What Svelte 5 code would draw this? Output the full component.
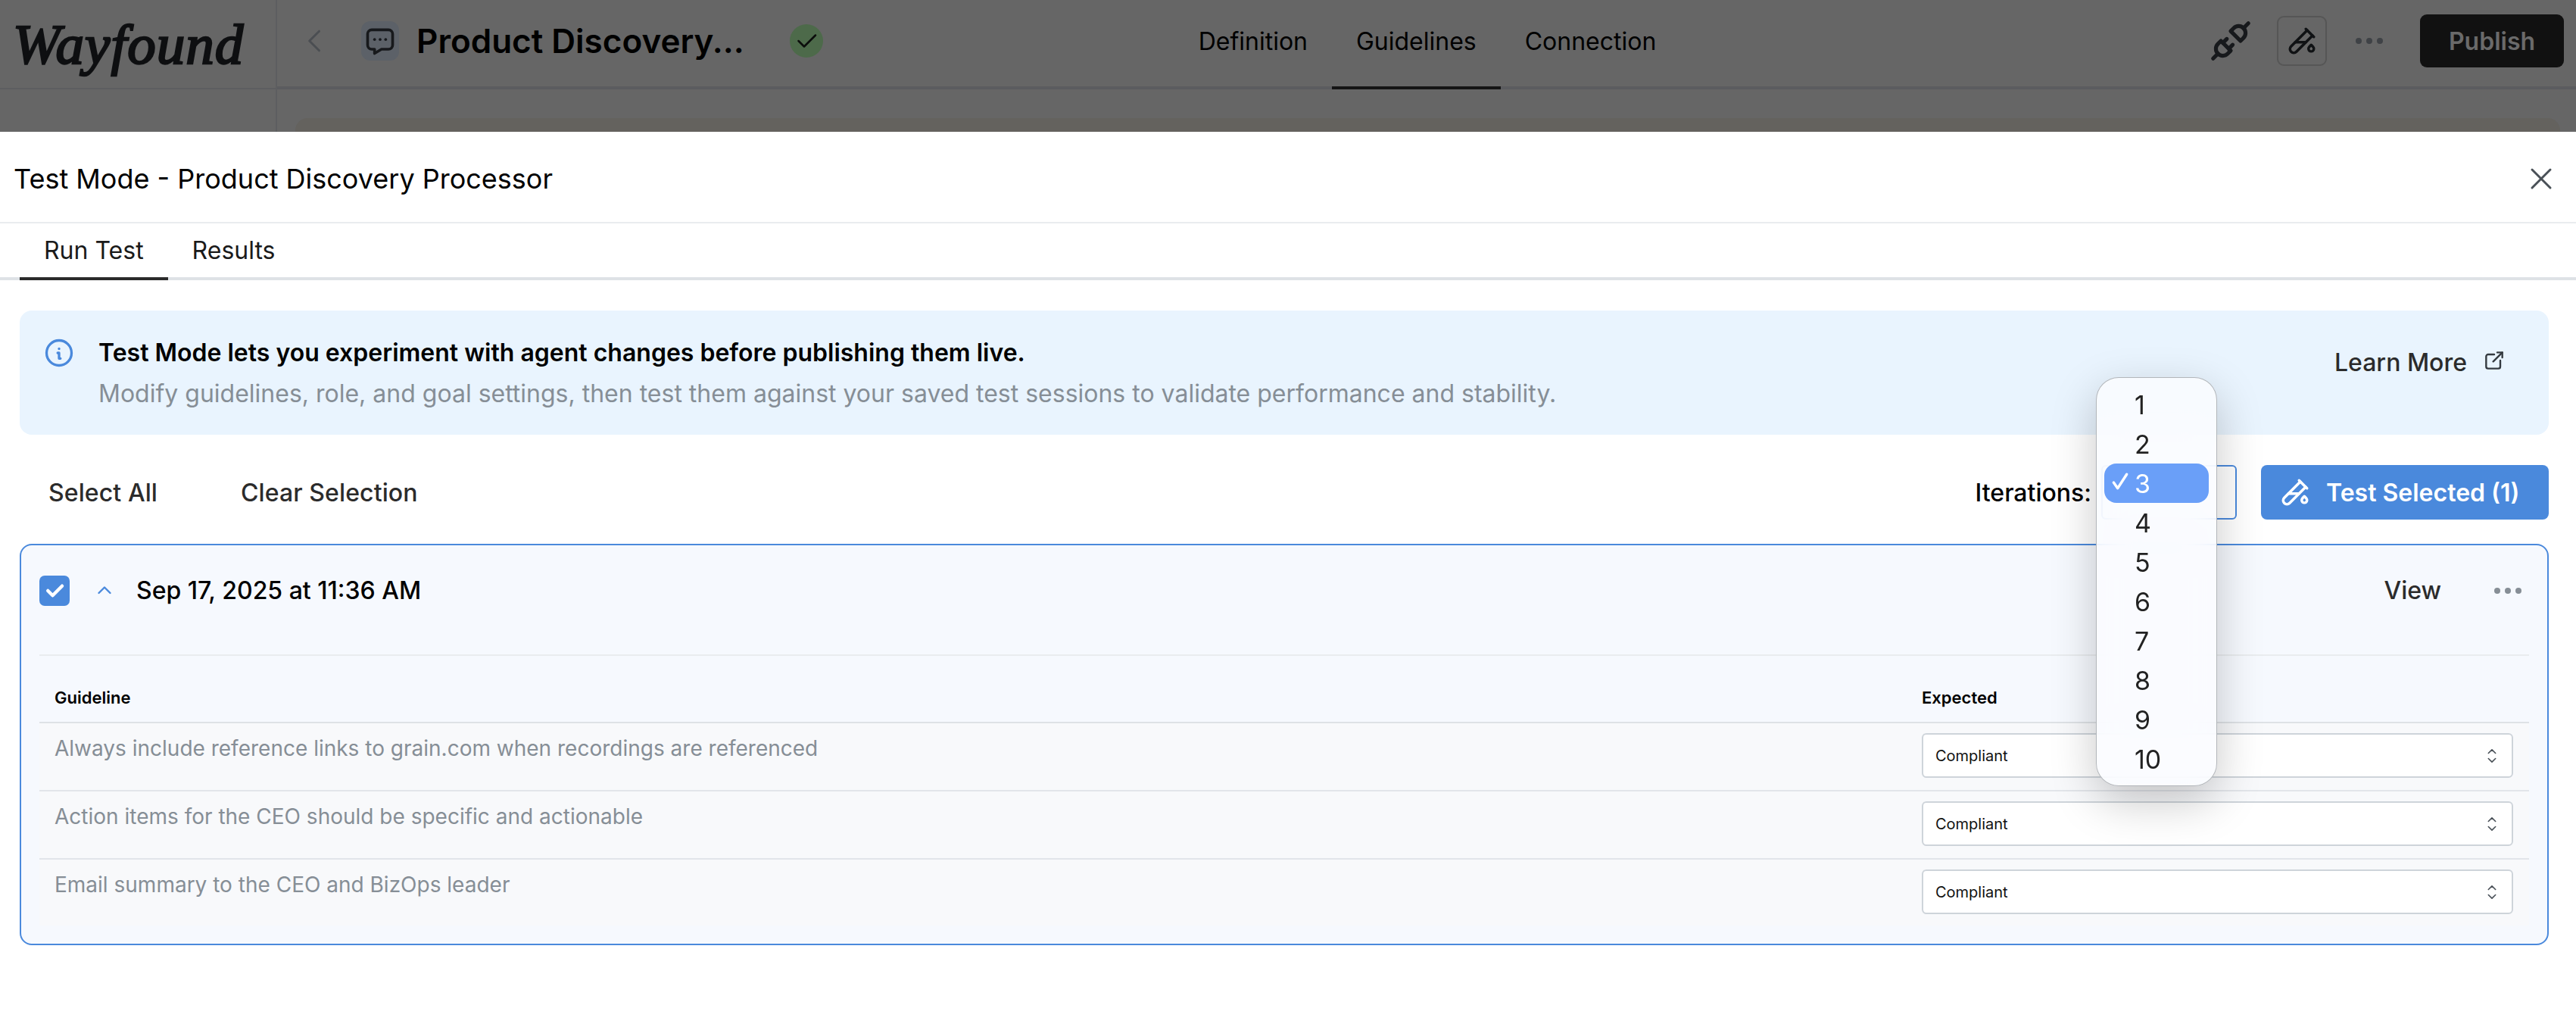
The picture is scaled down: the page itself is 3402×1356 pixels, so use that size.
<script lang="ts">
	const guidelines = [
		'Always include reference links to grain.com when recordings are referenced',
		'Action items for the CEO should be specific and actionable',
		'Email summary to the CEO and BizOps leader'
	];
	const options = [1, 2, 3, 4, 5, 6, 7, 8, 9, 10];
	let iterations = $state(3);
</script>

{#snippet pipe(size: number, width = 2)}
	<svg width={size} height={size} viewBox="0 0 24 24" fill="none" stroke="currentColor" stroke-width={width} stroke-linecap="round" stroke-linejoin="round">
		<path d="M20 8.04l-12.122 12.124a2.857 2.857 0 1 1 -4.041 -4.04l12.122 -12.124" />
		<path d="M7 13h8" />
		<path d="M19 15l1.5 1.6a2 2 0 1 1 -3 0l1.5 -1.602z" />
		<path d="M15 3l6 6" />
	</svg>
{/snippet}

{#snippet dots(cls: string)}
	<svg class={cls} width="36" height="10" viewBox="0 0 36 10" fill="currentColor">
		<circle cx="4" cy="5" r="4" /><circle cx="18" cy="5" r="4" /><circle cx="32" cy="5" r="4" />
	</svg>
{/snippet}

<div class="page">
	<!-- app behind the modal, dimmed -->
	<div class="behind">
		<aside class="side">
			<div class="logo-wrap"><span class="logo">Wayfound</span></div>
		</aside>
		<div class="main">
			<nav class="topnav">
				<div class="agent">
					<svg class="back" width="44" height="44" viewBox="0 0 24 24" fill="none" stroke="currentColor" stroke-width="1.6" stroke-linecap="round" stroke-linejoin="round"><path d="M15 5l-7 7l7 7" /></svg>
					<span class="chat">
						<svg width="44" height="44" viewBox="0 0 24 24" fill="none" stroke="currentColor" stroke-width="2" stroke-linecap="round" stroke-linejoin="round">
							<path d="M12 11v.01" /><path d="M8 11v.01" /><path d="M16 11v.01" />
							<path d="M18 4a3 3 0 0 1 3 3v8a3 3 0 0 1 -3 3h-5l-5 3v-3h-2a3 3 0 0 1 -3 -3v-8a3 3 0 0 1 3 -3z" />
						</svg>
					</span>
					<span class="agent-name">Product Discovery...</span>
					<span class="ok">
						<svg width="36" height="36" viewBox="0 0 24 24" fill="none" stroke="currentColor" stroke-width="1.7" stroke-linecap="round" stroke-linejoin="round"><path d="M5 12l5 5l10 -10" /></svg>
					</span>
				</div>
				<div class="navtabs">
					<span class="navtab">Definition</span>
					<span class="navtab active">Guidelines</span>
					<span class="navtab">Connection</span>
				</div>
				<div class="actions">
					<svg class="plug" width="62" height="62" viewBox="0 0 24 24" fill="none" stroke="currentColor" stroke-width="2" stroke-linecap="round" stroke-linejoin="round">
						<path d="M7 12l5 5l-1.5 1.5a3.536 3.536 0 1 1 -5 -5l1.5 -1.5z" />
						<path d="M17 12l-5 -5l1.5 -1.5a3.536 3.536 0 1 1 5 5l-1.5 1.5z" />
						<path d="M3 21l2.5 -2.5" /><path d="M18.5 5.5l2.5 -2.5" /><path d="M10 11l-2 2" /><path d="M13 14l-2 2" />
					</svg>
					<span class="testbtn">{@render pipe(42)}</span>
					{@render dots('navdots')}
					<span class="publish">Publish</span>
				</div>
			</nav>
			<div class="under"><div class="panel"></div></div>
		</div>
	</div>

	<section class="modal">
		<header class="modal-head">
			<h2>Test Mode - Product Discovery Processor</h2>
			<svg class="close" width="48" height="48" viewBox="0 0 24 24" fill="none" stroke="currentColor" stroke-width="1.5" stroke-linecap="round" stroke-linejoin="round"><path d="M18 6l-12 12" /><path d="M6 6l12 12" /></svg>
		</header>

		<div class="tabs">
			<span class="tab active">Run Test</span>
			<span class="tab">Results</span>
		</div>

		<div class="content">
			<div class="banner">
				<svg class="info" width="44" height="44" viewBox="0 0 24 24" fill="none" stroke="currentColor" stroke-width="1.8" stroke-linecap="round" stroke-linejoin="round">
					<path d="M3 12a9 9 0 1 0 18 0a9 9 0 0 0 -18 0" /><path d="M12 9h.01" /><path d="M11 12h1v4h1" />
				</svg>
				<div class="banner-text">
					<p class="banner-title">Test Mode lets you experiment with agent changes before publishing them live.</p>
					<p class="banner-sub">Modify guidelines, role, and goal settings, then test them against your saved test sessions to validate performance and stability.</p>
				</div>
				<span class="learn">
					Learn More
					<svg width="32" height="32" viewBox="0 0 24 24" fill="none" stroke="currentColor" stroke-width="1.8" stroke-linecap="round" stroke-linejoin="round">
						<path d="M12 6h-6a2 2 0 0 0 -2 2v10a2 2 0 0 0 2 2h10a2 2 0 0 0 2 -2v-6" /><path d="M11 13l9 -9" /><path d="M15 4h5v5" />
					</svg>
				</span>
			</div>

			<div class="toolbar">
				<span class="link first">Select All</span>
				<span class="link">Clear Selection</span>
				<span class="iter-label">Iterations:</span>
				<div class="iter-select">
					<div class="popup">
						{#each options as n}
							<button class="opt" class:sel={n === iterations} onclick={() => (iterations = n)}>
								{#if n === iterations}
									<svg class="tick" width="26" height="26" viewBox="0 0 24 24" fill="none" stroke="currentColor" stroke-width="3.2" stroke-linecap="round" stroke-linejoin="round"><path d="M4 13l5 7l11 -17" /></svg>
								{/if}
								{n}
							</button>
						{/each}
					</div>
				</div>
				<button class="run">{@render pipe(42)}Test Selected (1)</button>
			</div>

			<div class="card">
				<div class="card-head">
					<span class="check">
						<svg width="30" height="30" viewBox="0 0 24 24" fill="none" stroke="currentColor" stroke-width="3.6" stroke-linecap="round" stroke-linejoin="round"><path d="M5 12l5 5l10 -10" /></svg>
					</span>
					<svg class="chev" width="36" height="36" viewBox="0 0 24 24" fill="none" stroke="currentColor" stroke-width="1.6" stroke-linecap="round" stroke-linejoin="round"><path d="M7 14l5 -5l5 5" /></svg>
					<span class="date">Sep 17, 2025 at 11:36 AM</span>
					<span class="view">View</span>
					{@render dots('carddots')}
				</div>

				<div class="table">
					<div class="thead">
						<span class="col-g">Guideline</span>
						<span class="col-e">Expected</span>
					</div>
					{#each guidelines as g}
						<div class="row">
							<span class="col-g">{g}</span>
							<div class="col-e select">
								<span>Compliant</span>
								<svg width="28" height="28" viewBox="0 0 24 24" fill="none" stroke="currentColor" stroke-width="1.4" stroke-linecap="round" stroke-linejoin="round"><path d="M8 9l4 -4l4 4" /><path d="M16 15l-4 4l-4 -4" /></svg>
							</div>
						</div>
					{/each}
				</div>
			</div>
		</div>
	</section>
</div>

<style>
	:global(body) {
		margin: 0;
		background: #fff;
	}
	.page {
		width: 3402px;
		height: 1356px;
		overflow: hidden;
		display: flex;
		flex-direction: column;
		font-family: Inter, 'Liberation Sans', sans-serif;
		color: #000;
	}
	p,
	h2 {
		margin: 0;
	}
	button {
		font: inherit;
		border: 0;
	}

	/* ---------- dimmed app ---------- */
	.behind {
		height: 174px;
		flex: none;
		display: flex;
		background: #666;
		overflow: hidden;
	}
	.side {
		width: 364px;
		flex: none;
		border-right: 2px solid #5d5e60;
	}
	.logo-wrap {
		height: 116px;
		border-bottom: 2px solid #5d5e60;
		padding-left: 17px;
		display: flex;
		align-items: center;
	}
	.logo {
		font-family: 'Liberation Serif', serif;
		font-style: italic;
		font-size: 75px;
		-webkit-text-stroke: 2.5px #0e0f11;
		letter-spacing: 1px;
		color: #0e0f11;
		line-height: 1;
	}
	.main {
		flex: 1;
		display: flex;
		flex-direction: column;
	}
	.topnav {
		height: 114px;
		box-sizing: border-box;
		flex: none;
		padding-bottom: 6px;
		box-shadow: 0 4px 0 #5b5c5f;
		display: grid;
		grid-template-columns: 1fr auto 1fr;
		align-items: center;
	}
	.agent {
		display: flex;
		align-items: center;
		padding-left: 28px;
	}
	.back {
		color: #4b4e52;
		margin-right: 39px;
	}
	.chat {
		width: 50px;
		height: 52px;
		border-radius: 12px;
		background: #5c6168;
		color: #17191c;
		display: flex;
		align-items: center;
		justify-content: center;
		margin-right: 23px;
	}
	.agent-name {
		font-size: 44px;
		font-weight: 600;
		color: #000;
		white-space: nowrap;
	}
	.ok {
		width: 44px;
		height: 44px;
		border-radius: 50%;
		background: #4d6a4a;
		color: #0b0d0b;
		display: flex;
		align-items: center;
		justify-content: center;
		margin-left: 60px;
	}
	.navtabs {
		display: flex;
		align-self: stretch;
		margin: 0 0 -6px 2px;
		padding-bottom: 6px;
	}
	.navtab {
		padding: 0 32px;
		font-size: 32px;
		color: #000;
		display: flex;
		align-items: center;
		position: relative;
	}
	.navtab.active::after {
		content: '';
		position: absolute;
		left: 0;
		right: 0;
		bottom: -10px;
		height: 4px;
		background: #151515;
	}
	.actions {
		display: flex;
		align-items: center;
		justify-content: flex-end;
		padding-right: 16px;
	}
	.plug {
		color: #17191c;
		margin-right: 30px;
	}
	.testbtn {
		width: 62px;
		height: 62px;
		border: 2px solid #565656;
		border-radius: 9px;
		display: flex;
		align-items: center;
		justify-content: center;
		color: #101214;
		margin-right: 38px;
	}
	:global(.navdots) {
		color: #3f4246;
		margin-right: 49px;
	}
	.publish {
		width: 190px;
		height: 70px;
		border-radius: 9px;
		background: #111;
		color: #6a6a6a;
		font-size: 32px;
		font-weight: 600;
		display: flex;
		align-items: center;
		justify-content: center;
	}
	.under {
		flex: 1;
		padding: 42px 21px 0 24px;
	}
	.panel {
		height: 100%;
		background: #64625e;
		border-radius: 16px 16px 0 0;
	}

	/* ---------- modal ---------- */
	.modal {
		flex: 1;
		background: #fff;
		display: flex;
		flex-direction: column;
	}
	.modal-head {
		flex: none;
		display: flex;
		align-items: center;
		justify-content: space-between;
		padding: 4px 22px 0 18px;
		height: 115px;
		border-bottom: 2px solid #e9ecef;
	}
	h2 {
		font-size: 36px;
		font-weight: 400;
		line-height: 1;
	}
	.close {
		color: #495057;
	}
	.tabs {
		height: 71px;
		flex: none;
		display: flex;
		padding-left: 26px;
		border-bottom: 4px solid #dee2e6;
	}
	.tab {
		padding: 0 32px;
		font-size: 32px;
		color: #1a1a1a;
		display: flex;
		align-items: center;
		position: relative;
	}
	.tab.active::after {
		content: '';
		position: absolute;
		left: 0;
		right: 0;
		bottom: -4px;
		height: 4px;
		background: #2b2b2b;
	}
	.content {
		padding: 40px 36px 0 26px;
	}
	.banner {
		height: 164px;
		box-sizing: border-box;
		background: #e9f4fe;
		border-radius: 16px;
		display: flex;
		align-items: flex-start;
		padding: 36px 56px 0 30px;
	}
	.info {
		color: #4a89dc;
		margin: -2px 30px 0 0;
		flex: none;
	}
	.banner-text {
		flex: 1;
		display: flex;
		flex-direction: column;
		gap: 14px;
		font-size: 32px;
		line-height: 40px;
	}
	.banner-title {
		font-weight: 600;
		color: #000;
	}
	.banner-sub {
		color: #868e96;
	}
	.learn {
		display: flex;
		align-items: center;
		gap: 20px;
		font-size: 32px;
		font-weight: 500;
		color: #2b2b2b;
		margin-top: 13px;
	}
	.learn svg {
		color: #343a40;
		margin-top: -6px;
	}
	.toolbar {
		height: 144px;
		box-sizing: border-box;
		padding: 40px 0 32px;
		display: flex;
		align-items: center;
	}
	.link {
		font-size: 32px;
		font-weight: 500;
		letter-spacing: 0.1px;
		color: #2b2b2b;
		margin-right: 110px;
	}
	.link.first {
		margin-left: 38px;
	}
	.iter-label {
		margin-left: auto;
		font-size: 32px;
		font-weight: 500;
		color: #000;
		margin-right: 13px;
	}
	.iter-select {
		width: 179px;
		height: 72px;
		box-sizing: border-box;
		border: 2px solid #4a89dc;
		border-radius: 6px;
		position: relative;
		margin-right: 32px;
		background: #fff;
	}
	.popup {
		position: absolute;
		left: -9px;
		top: -118px;
		width: 160px;
		height: 540px;
		box-sizing: border-box;
		padding: 9px 10px;
		border-radius: 30px;
		border: 1px solid rgba(120, 125, 130, 0.55);
		background: rgba(250, 252, 255, 0.86);
		backdrop-filter: blur(24px);
		box-shadow: 0 20px 60px rgba(0, 0, 0, 0.22);
		display: flex;
		flex-direction: column;
		z-index: 5;
	}
	.opt {
		flex: 0 0 52px;
		background: transparent;
		border-radius: 16px;
		font-size: 34px;
		color: #222;
		text-align: left;
		padding: 0 0 0 40px;
		position: relative;
	}
	.opt.sel {
		background: #6a9ff8;
		color: #fff;
	}
	.tick {
		position: absolute;
		left: 8px;
		top: 11px;
	}
	.run {
		width: 380px;
		height: 72px;
		border-radius: 8px;
		background: #4a89dc;
		color: #fff;
		font-size: 32px;
		font-weight: 600;
		display: flex;
		align-items: center;
		gap: 20px;
		padding: 0 0 0 24px;
		white-space: nowrap;
	}

	/* ---------- session card ---------- */
	.card {
		height: 530px;
		box-sizing: border-box;
		border: 2px solid #4a89dc;
		border-radius: 16px;
		background: #f6f9fe;
		padding: 0 24px;
	}
	.card-head {
		height: 146px;
		box-sizing: border-box;
		display: flex;
		align-items: flex-start;
		padding-top: 40px;
		border-bottom: 2px solid #e9ecef;
	}
	.check {
		width: 40px;
		height: 40px;
		border-radius: 7px;
		background: #4a89dc;
		color: #fff;
		display: flex;
		align-items: center;
		justify-content: center;
		margin-right: 28px;
	}
	.chev {
		color: #4a89dc;
		margin: 2px 24px 0 0;
	}
	.date {
		font-size: 32px;
		font-weight: 500;
		line-height: 40px;
		color: #000;
	}
	.view {
		margin-left: auto;
		font-size: 32px;
		font-weight: 500;
		line-height: 40px;
		color: #2b2b2b;
		margin-right: 70px;
	}
	:global(.carddots) {
		color: #868e96;
		margin: 15px 10px 0 0;
	}
	.thead {
		height: 89px;
		box-sizing: border-box;
		display: flex;
		align-items: flex-end;
		padding: 0 21px 17px 20px;
		font-size: 22px;
		font-weight: 600;
		line-height: 30px;
		border-bottom: 2px solid #dee2e6;
	}
	.col-g {
		width: 2466px;
		flex: none;
	}
	.row {
		height: 90px;
		box-sizing: border-box;
		display: flex;
		align-items: flex-start;
		padding: 13px 21px 0 20px;
		background: #f8f9fb;
		border-bottom: 2px solid #e2e5ea;
		font-size: 28px;
		line-height: 40px;
		color: #868e96;
	}
	.row:last-child {
		border-bottom: 0;
		height: 87px;
	}
	.select {
		flex: 1;
		height: 59px;
		box-sizing: border-box;
		background: #fff;
		border: 2px solid #ced4da;
		border-radius: 6px;
		display: flex;
		align-items: center;
		justify-content: space-between;
		padding: 0 12px 0 16px;
		font-size: 20px;
		color: #111;
	}
	.select svg {
		color: #495057;
	}
</style>
